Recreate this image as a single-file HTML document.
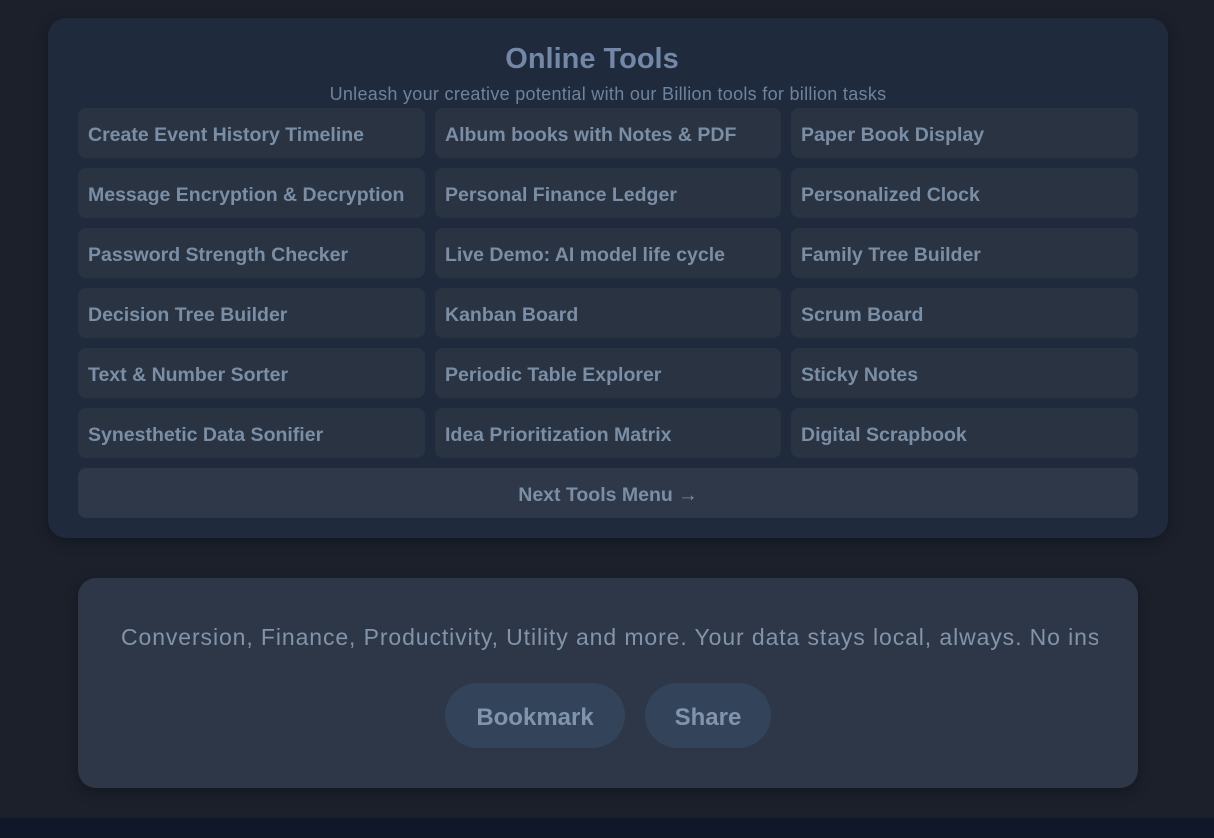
<!DOCTYPE html>
<html><head><style>
*{box-sizing:border-box;margin:0;padding:0}
body{width:1214px;height:838px;background:#1b202b;font-family:"Liberation Sans",sans-serif;position:relative;overflow:hidden;color:#7d91aa}
.panel{position:absolute;left:48px;top:18px;width:1120px;height:520px;background:#1f2a3c;border-radius:18px;box-shadow:0 4px 14px rgba(0,0,0,.3)}
h1{position:absolute;left:-16px;width:100%;top:25px;text-align:center;font-size:29px;font-weight:bold;color:#7288a6}
.sub{position:absolute;left:0;width:100%;top:66px;text-align:center;font-size:18px;color:#6f839c;letter-spacing:0.3px}
.grid{position:absolute;left:30px;top:90px;display:grid;grid-template-columns:347px 346px 347px;column-gap:10px;row-gap:10px}
.c{height:50px;background:#2a3342;border-radius:8px;padding-left:10px;padding-top:2px;line-height:50px;font-size:19.5px;font-weight:bold;color:#7a8ea6;white-space:nowrap}
.next{position:absolute;left:30px;top:450px;width:1060px;height:50px;background:#2e3848;border-radius:8px;text-align:center;padding-top:2px;line-height:50px;font-size:19.5px;font-weight:bold;color:#7a8ea6}
.card{position:absolute;left:78px;top:578px;width:1060px;height:210px;background:#2e3748;border-radius:18px;box-shadow:0 4px 14px rgba(0,0,0,.3);overflow:hidden}
.txt{position:absolute;left:43px;top:46px;width:977px;overflow:hidden;font-size:23px;letter-spacing:0.9px;white-space:nowrap;color:#8294aa}
.b{position:absolute;top:105px;height:65px;background:#33445a;border-radius:33px;text-align:center;padding-top:2px;line-height:65px;font-size:24px;font-weight:bold;color:#8094ad}
.foot{position:absolute;left:0;top:818px;width:1214px;height:20px;background:#0f1729}
</style></head><body>
<div class="panel">
<h1>Online Tools</h1>
<div class="sub">Unleash your creative potential with our Billion tools for billion tasks</div>
<div class="grid">
<div class="c">Create Event History Timeline</div><div class="c">Album books with Notes &amp; PDF</div><div class="c">Paper Book Display</div>
<div class="c">Message Encryption &amp; Decryption</div><div class="c">Personal Finance Ledger</div><div class="c">Personalized Clock</div>
<div class="c">Password Strength Checker</div><div class="c">Live Demo: AI model life cycle</div><div class="c">Family Tree Builder</div>
<div class="c">Decision Tree Builder</div><div class="c">Kanban Board</div><div class="c">Scrum Board</div>
<div class="c">Text &amp; Number Sorter</div><div class="c">Periodic Table Explorer</div><div class="c">Sticky Notes</div>
<div class="c">Synesthetic Data Sonifier</div><div class="c">Idea Prioritization Matrix</div><div class="c">Digital Scrapbook</div>
</div>
<div class="next">Next Tools Menu →</div>
</div>
<div class="card">
<div class="txt">Conversion, Finance, Productivity, Utility and more. Your data stays local, always. No installation required.</div>
<div class="b" style="left:367px;width:180px">Bookmark</div>
<div class="b" style="left:567px;width:126px">Share</div>
</div>
<div class="foot"></div>
</body></html>
